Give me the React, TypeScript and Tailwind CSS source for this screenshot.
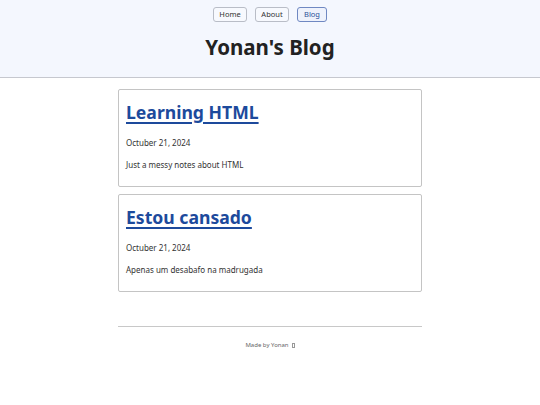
const posts = [
  { title: "Learning HTML", date: "Octuber 21, 2024", desc: "Just a messy notes about HTML" },
  { title: "Estou cansado", date: "Octuber 21, 2024", desc: "Apenas um desabafo na madrugada" },
];

export default function App() {
  return (
    <div className="min-h-screen bg-white text-[#222] font-['Noto_Sans',sans-serif]">
      {/* Header */}
      <header className="bg-[#f4f7fe] border-b border-[#c6c8cf] h-[78px] flex flex-col items-center pt-[7px]">
        <nav className="flex gap-[8px]">
          <a className="h-[15px] w-[34px] flex items-center justify-center rounded-[3px] border border-[#b9bdc7] text-[7.5px] text-[#333] bg-[#f7f9fe]">
            Home
          </a>
          <a className="h-[15px] w-[34px] flex items-center justify-center rounded-[3px] border border-[#b9bdc7] text-[7.5px] text-[#333] bg-[#f7f9fe]">
            About
          </a>
          <a className="h-[15px] w-[30px] flex items-center justify-center rounded-[3px] border border-[#6f88c2] text-[7.5px] text-[#2a4f98] bg-[#eef2fc]">
            Blog
          </a>
        </nav>
        <h1 className="mt-[10px] text-[20.5px] leading-[30px] font-bold text-[#222]">Yonan's Blog</h1>
      </header>

      {/* Posts */}
      <main className="w-[304px] mx-auto mt-[11px] flex flex-col gap-[7px]">
        {posts.map((p) => (
          <article key={p.title} className="h-[98px] border border-[#c4c4c4] rounded-[2px] px-[7px] pt-[9px]">
            <h2 className="text-[17.6px] leading-[26px] font-bold text-[#1d4a9c] underline underline-offset-[3px] decoration-[2px]">
              {p.title}
            </h2>
            <p className="mt-[12px] text-[8px] leading-[12px] text-[#333]">{p.date}</p>
            <p className="mt-[10px] text-[8px] leading-[12px] text-[#333]">{p.desc}</p>
          </article>
        ))}
      </main>

      {/* Footer */}
      <footer className="w-[304px] mx-auto mt-[34px] border-t border-[#c8c8c8] pt-[13px] flex justify-center">
        <span className="text-[6px] leading-[10px] text-[#666] flex items-center gap-[2px]">
          Made by Yonan
          <span className="inline-block w-[3px] h-[5px] border border-[#999] ml-[1px]"></span>
        </span>
      </footer>
    </div>
  );
}
